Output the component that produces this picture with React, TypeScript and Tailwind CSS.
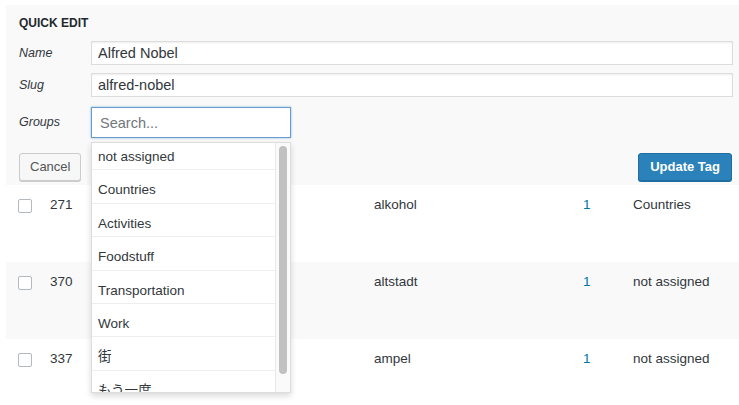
import React from 'react';

const groups = ['not assigned', 'Countries', 'Activities', 'Foodstuff', 'Transportation', 'Work', '街', 'もう一度'];

const rows = [
  { id: 271, slug: 'alkohol', count: 1, group: 'Countries' },
  { id: 370, slug: 'altstadt', count: 1, group: 'not assigned' },
  { id: 337, slug: 'ampel', count: 1, group: 'not assigned' },
];

function Field({ label, value }: { label: string; value: string }) {
  return (
    <div className="flex items-center">
      <span className="w-[72px] text-[12.5px] italic text-[#32373c]">{label}</span>
      <input
        readOnly
        value={value}
        className="flex-1 h-[24px] border border-[#ddd] bg-white px-[6px] text-[14.5px] text-[#32373c] shadow-[inset_0_1px_2px_rgba(0,0,0,0.07)] outline-none"
      />
    </div>
  );
}

export default function App() {
  return (
    <div className="min-h-screen bg-white pt-[5px] pl-[6px] font-['Liberation_Sans',Arial,'Noto_Sans_CJK_JP',sans-serif] text-[#32373c]">
      {/* Quick edit panel */}
      <div className="h-[180px] bg-[#f9f9f9] pl-[13px] pr-[6px] pt-[10px]">
        <h2 className="text-[12px] leading-[16px] font-bold uppercase text-[#23282d]">Quick Edit</h2>
        <div className="mt-[10px] flex flex-col gap-[8px]">
          <Field label="Name" value="Alfred Nobel" />
          <Field label="Slug" value="alfred-nobel" />
        </div>

        <div className="mt-[10px] flex items-center">
          <span className="w-[72px] text-[12.5px] italic">Groups</span>
          <div className="relative z-10">
            <input
              readOnly
              placeholder="Search..."
              className="w-[200px] h-[31px] border border-[#6e9bd6] bg-white px-[8px] text-[14.5px] placeholder:text-[#72777c] shadow-[0_0_2px_rgba(30,140,190,0.6)] outline-none"
            />
            {/* Dropdown */}
            <div className="absolute left-0 top-[calc(100%+4px)] flex h-[251px] w-[200px] border border-[#ddd] bg-white shadow-[0_3px_6px_rgba(0,0,0,0.15)]">
              <div className="flex-1 overflow-hidden">
                <ul className="-mt-[6px]">
                  {groups.map((g) => (
                    <li
                      key={g}
                      className="h-[33.4px] border-b border-[#eee] pl-[6px] pt-[10px] text-[13.5px] leading-[20px]"
                    >
                      {g}
                    </li>
                  ))}
                </ul>
              </div>
              <div className="w-[15px] border-l border-[#e8e8e8] bg-[#fafafa] px-[3px] pt-[3px]">
                <div className="h-[228px] w-[8px] rounded-full bg-[#c1c1c1]" />
              </div>
            </div>
          </div>
        </div>

        <div className="mt-[15px] flex items-center justify-between pr-[1px]">
          <button className="h-[28px] rounded-[3px] border border-[#ccc] bg-[#f7f7f7] px-[10px] text-[13px] text-[#555] shadow-[0_1px_0_#ccc]">
            Cancel
          </button>
          <button className="h-[28px] rounded-[3px] border border-[#1f6e9f] bg-[#2b82ba] px-[11px] text-[13px] font-bold text-white shadow-[0_1px_0_#1f6e9f]">
            Update Tag
          </button>
        </div>
      </div>

      {/* Tag rows (name column sits under the dropdown) */}
      {rows.map((r, i) => (
        <div
          key={r.id}
          className={`flex h-[77px] items-start pl-[12px] text-[13.5px] leading-[20px] ${i % 2 === 1 ? 'bg-[#f9f9f9]' : 'bg-white'}`}
        >
          <div className="mt-[14px] h-[14px] w-[14px] rounded-[2px] border border-[#b4b9be] bg-white" />
          <div className="ml-[18px] w-[324px] pt-[10px]">{r.id}</div>
          <div className="w-[209px] pt-[10px]">{r.slug}</div>
          <div className="w-[50px] pt-[10px] text-[#0073aa]">{r.count}</div>
          <div className="pt-[10px]">{r.group}</div>
        </div>
      ))}
    </div>
  );
}
